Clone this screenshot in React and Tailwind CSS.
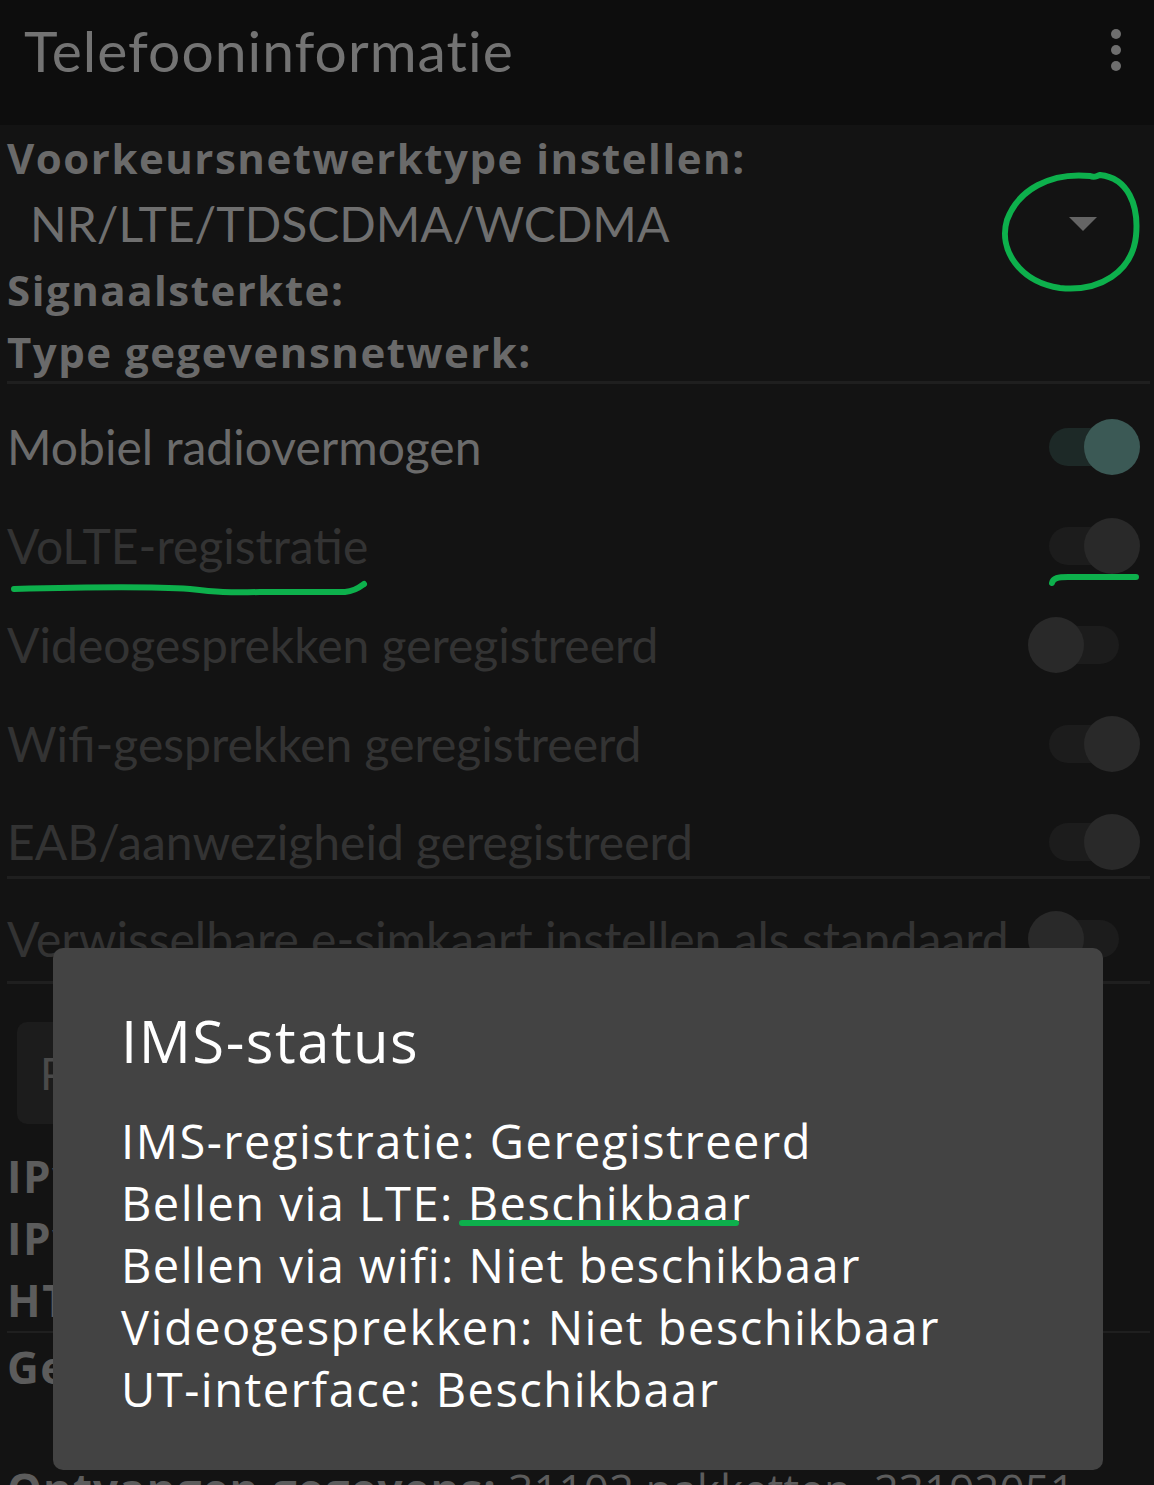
import { useState } from "react";

const font = { fontFamily: "Lato, 'Open Sans', sans-serif" };
const wide = { fontFamily: "'Open Sans', Lato, sans-serif" };

function Toggle({ right, active }) {
	// track sits at a fixed place, the thumb overflows on the side it rests on
	return (
		<div className="relative w-[112px] h-[60px] flex items-center">
			<div
				className={`absolute left-[21px] w-[70px] h-[38px] rounded-full ${
					active ? "bg-[#1d2927]" : "bg-[#1c1c1c]"
				}`}
			/>
			<div
				className={`absolute w-[56px] h-[56px] rounded-full ${
					right ? "left-[56px]" : "left-0"
				} ${active ? "bg-[#3b5955]" : "bg-[#292929]"}`}
			/>
		</div>
	);
}

function ToggleRow({ label, enabled, right, active, className }) {
	return (
		<div className={`flex items-center justify-between pl-[7px] pr-[14px] ${className}`}>
			<span
				className={`text-[48px] leading-none whitespace-nowrap ${
					enabled ? "text-[#6b6b6b]" : "text-[#333333]"
				}`}
			>
				{label}
			</span>
			<Toggle right={right} active={active} />
		</div>
	);
}

function Label({ children, className }) {
	return (
		<div
			className={`flex items-center pl-[7px] font-bold leading-none tracking-[1.5px] ${className}`}
			style={wide}
		>
			{children}
		</div>
	);
}

export default function App() {
	const [network] = useState("NR/LTE/TDSCDMA/WCDMA");

	return (
		<div
			className="relative w-[1154px] h-[1485px] overflow-hidden bg-[#131313]"
			style={font}
		>
			{/* App bar */}
			<div className="h-[125px] bg-[#0d0d0d]">
				<div className="h-[100px] flex items-center justify-between pl-[24px] pr-[33px]">
					<span className="text-[57px] leading-none tracking-[1px] text-[#737373]">
						Telefooninformatie
					</span>
					<div className="flex flex-col gap-[6px]">
						<div className="w-[10px] h-[10px] rounded-full bg-[#6e6e6e]" />
						<div className="w-[10px] h-[10px] rounded-full bg-[#6e6e6e]" />
						<div className="w-[10px] h-[10px] rounded-full bg-[#6e6e6e]" />
					</div>
				</div>
			</div>

			{/* Network info */}
			<div className="text-[#6a6a6a]">
				<Label className="h-[66px] text-[42px]">Voorkeursnetwerktype instellen:</Label>
				<div className="h-[66px] flex items-center justify-between pl-[30px] pr-[57px]">
					<span className="text-[48px] leading-none text-[#6f6f6f]">{network}</span>
					<div className="w-0 h-0 border-l-[14px] border-r-[14px] border-t-[14px] border-l-transparent border-r-transparent border-t-[#646464]" />
				</div>
				<Label className="h-[66px] text-[42px]">Signaalsterkte:</Label>
				<Label className="h-[58px] text-[42px]">Type gegevensnetwerk:</Label>
				<div className="ml-[7px] mr-[4px] h-[3px] bg-[#1f1f1f]" />
			</div>

			{/* Toggles */}
			<div className="pt-[13px]">
				<ToggleRow className="h-[99px]" label="Mobiel radiovermogen" enabled right active />
				<ToggleRow className="h-[99px]" label="VoLTE-registratie" right />
				<ToggleRow className="h-[99px]" label="Videogesprekken geregistreerd" />
				<ToggleRow className="h-[99px]" label="Wifi-gesprekken geregistreerd" right />
				<ToggleRow className="h-[83px] pt-[15px]" label="EAB/aanwezigheid geregistreerd" right />
				<div className="ml-[7px] mr-[4px] h-[3px] bg-[#1f1f1f]" />
				<ToggleRow
					className="h-[102px] pt-[18px]"
					label="Verwisselbare e-simkaart instellen als standaard"
				/>
				<div className="ml-[7px] mr-[4px] h-[3px] bg-[#1f1f1f]" />
			</div>

			{/* Ping / data section, mostly under the dialog */}
			<div className="pt-[38px] text-[#5c5c5c]">
				<div className="ml-[17px] w-[420px] h-[102px] rounded-[10px] bg-[#1c1c1c] flex items-center pl-[23px] text-[44px] text-[#4a4a4a]">
					Ping-test uitvoeren
				</div>
				<div className="pt-[21px]">
					<Label className="h-[62px] text-[44px]">IPv4-hostnaam pingen:</Label>
					<Label className="h-[62px] text-[44px]">IPv6-hostnaam pingen:</Label>
					<Label className="h-[62px] text-[44px]">HTTP-clienttest:</Label>
				</div>
				<div className="ml-[7px] mr-[4px] h-[2px] bg-[#1f1f1f]" />
				<Label className="h-[68px] text-[44px]">Gegevensservice:</Label>
				<div className="pt-[66px] pl-[7px] text-[44px] leading-none whitespace-nowrap" style={wide}>
					<span className="font-bold tracking-[1px]">Ontvangen gegevens:</span>{" "}
					<span>31102 pakketten, 23192051</span>
				</div>
			</div>

			{/* IMS status dialog */}
			<div
				className="absolute left-[53px] top-[948px] w-[1050px] h-[522px] rounded-[10px] bg-[#434343] pl-[68px] pt-[64px] text-white"
				style={wide}
			>
				<div className="text-[58px] leading-none tracking-[1.5px]">IMS-status</div>
				<div className="mt-[40px] text-[47px] leading-[62px] tracking-[1.5px]">
					<div>IMS-registratie: Geregistreerd</div>
					<div>Bellen via LTE: Beschikbaar</div>
					<div>Bellen via wifi: Niet beschikbaar</div>
					<div>Videogesprekken: Niet beschikbaar</div>
					<div>UT-interface: Beschikbaar</div>
				</div>
			</div>

			{/* Green pen annotations */}
			<svg
				className="absolute inset-0 pointer-events-none"
				width="1154"
				height="1485"
				viewBox="0 0 1154 1485"
				fill="none"
				stroke="#0db04c"
				strokeWidth="6"
				strokeLinecap="round"
				strokeLinejoin="round"
			>
				<path d="M1090 176 C1050 172 1018 190 1007 220 C998 250 1020 282 1060 288 C1100 292 1132 272 1136 236 C1139 205 1128 178 1100 175 C1096 176 1095 178 1090 176" />
				<path d="M14 589 C90 587 160 587 190 589 C215 592 230 593 260 592 L345 592 C356 591 360 587 364 584" />
				<path d="M1052 583 C1053 578 1058 577 1068 577 L1136 577" />
				<path d="M462 1223 L736 1223" />
			</svg>
		</div>
	);
}
